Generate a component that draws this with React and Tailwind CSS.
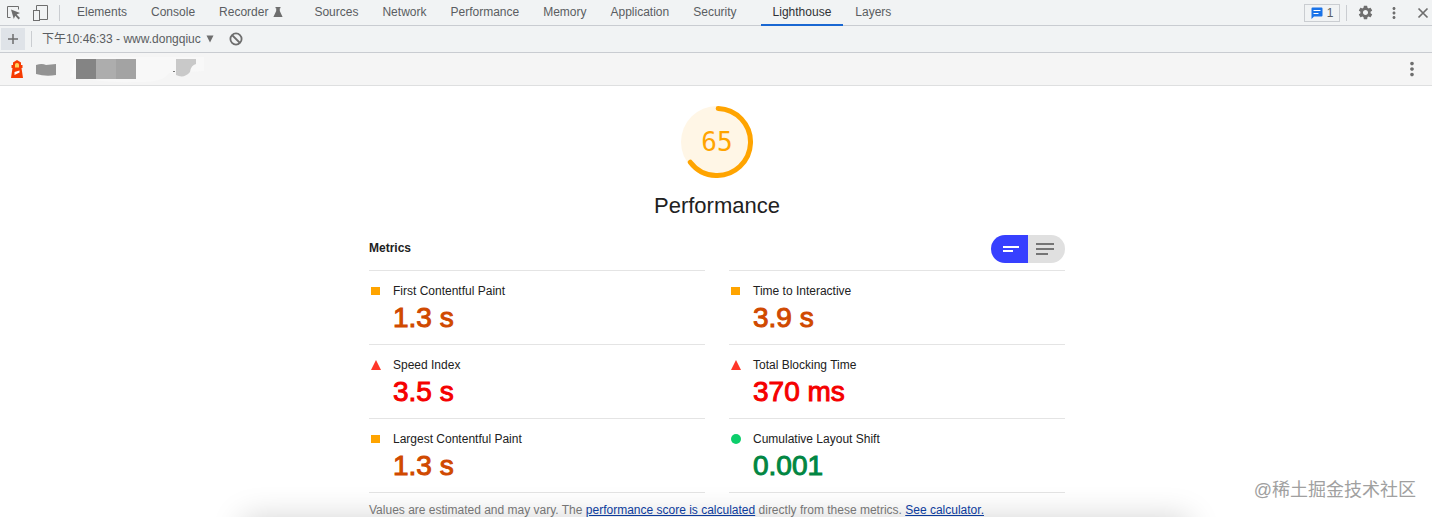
import { useState } from 'react';
import { MdSettings, MdMoreVert } from 'react-icons/md';

const TABS = ['Elements', 'Console', 'Recorder', 'Sources', 'Network', 'Performance', 'Memory', 'Application', 'Security', 'Lighthouse', 'Layers'];

const METRICS = [
  { name: 'First Contentful Paint', value: '1.3 s', rating: 'average' },
  { name: 'Time to Interactive', value: '3.9 s', rating: 'average' },
  { name: 'Speed Index', value: '3.5 s', rating: 'fail' },
  { name: 'Total Blocking Time', value: '370 ms', rating: 'fail' },
  { name: 'Largest Contentful Paint', value: '1.3 s', rating: 'average' },
  { name: 'Cumulative Layout Shift', value: '0.001', rating: 'pass' },
];

const VALUE_COLORS = {
  average: 'text-[#d04900]',
  fail: 'text-[#f50000]',
  pass: 'text-[#018642]',
};

function RatingIcon({ rating }) {
  return (
    <svg width="14" height="14" viewBox="0 0 14 14" className="shrink-0" aria-hidden="true">
      {rating === 'average' && <rect x="2" y="3" width="9" height="8" fill="#ffa400" />}
      {rating === 'fail' && <path d="M7 2 L12 12 H2 Z" fill="#ff3629" />}
      {rating === 'pass' && <circle cx="7" cy="7" r="5" fill="#0cce6b" />}
    </svg>
  );
}

function Metric({ name, value, rating }) {
  return (
    <div className="flex h-[74px] gap-[10px] border-t border-[#e4e4e4] pt-[13px]">
      <RatingIcon rating={rating} />
      <div>
        <h3 className="text-xs leading-[14px] text-[#212121]">{name}</h3>
        <p className={`text-[28px] leading-10 [-webkit-text-stroke:1px] ${VALUE_COLORS[rating]}`}>{value}</p>
      </div>
    </div>
  );
}

function Gauge({ score }) {
  const length = 2 * Math.PI * 33;
  return (
    <div className="relative size-[72px]">
      <svg viewBox="0 0 72 72" className="size-full" aria-hidden="true">
        <circle cx="36" cy="36" r="36" fill="#fff6e6" />
        <circle
          cx="36" cy="36" r="33.5" fill="none" stroke="#ffa400" strokeWidth="5" strokeLinecap="round"
          strokeDasharray={`${(length * score) / 100} ${length}`} transform="rotate(-88 36 36)"
        />
      </svg>
      <span className="absolute inset-0 flex items-center justify-center font-['DejaVu_Sans_Mono',monospace] text-[26px] text-[#ffa400]">{score}</span>
    </div>
  );
}

function LighthouseLogo() {
  return (
    <svg width="14" height="20" viewBox="0 0 14 20" className="shrink-0" aria-hidden="true">
      <path d="M7 1 L11 3.5 V6 H12.5 V9 H11.5 L13 19 H1 L2.5 9 H1.5 V6 H3 V3.5 Z" fill="#f63b02" />
      <path d="M5 8.5 V5.5 Q5 4 7 4 Q9 4 9 5.5 V8.5 Z" fill="#ffd15c" />
      <path d="M4.5 13 L9.5 11.5 V13.5 L4.5 16 Z" fill="#fff" />
    </svg>
  );
}

export default function App() {
  const [tab, setTab] = useState('Lighthouse');
  const [expanded, setExpanded] = useState(false);

  return (
    <div className="relative min-h-screen overflow-hidden bg-white font-['Liberation_Sans','Noto_Sans_CJK_SC',sans-serif] text-xs text-[#5a5d61]">
      <header className="flex h-[26px] items-center justify-between border-b border-[#c9ccd1] bg-[#f1f3f4]">
        <div className="flex h-full items-center">
          <button className="ml-1.5" aria-label="Inspect">
            <svg width="16" height="16" viewBox="0 0 16 16" fill="none" stroke="#6e6e6e">
              <path d="M4.5 12.5 H1.5 V1.5 H12.5 V4.5" />
              <path d="M5 4.5 L14 8 L10.6 9.4 L14 13 L12.6 14.4 L9.2 10.8 L7.8 14 Z" fill="#6e6e6e" stroke="none" />
            </svg>
          </button>
          <button className="ml-[10px]" aria-label="Toggle device toolbar">
            <svg width="16" height="18" viewBox="0 0 16 18" fill="none" stroke="#6e6e6e">
              <path d="M4.5 6 V1.5 H15.5 V15.5 H8" />
              <rect x="1.5" y="6.5" width="6" height="10" />
            </svg>
          </button>
          <span className="ml-[11px] h-4 w-px bg-[#cacdd1]" />
          <nav className="ml-[5px] flex h-[26px]">
            {TABS.map(name => (
              <button
                key={name}
                onClick={() => setTab(name)}
                className={`flex items-center gap-1 border-b-2 px-3 pt-px leading-4 ${name === 'Recorder' ? 'mr-1.5' : ''} ${name === 'Security' ? 'mr-3' : ''} ${
                  tab === name ? 'border-[#1967d2] text-[#303134]' : 'border-transparent'
                }`}
              >
                {name}
                {name === 'Recorder' && (
                  <svg width="12" height="12" viewBox="0 0 12 12" fill="#6e6e6e" aria-hidden="true">
                    <path d="M3.5 1 H8.5 V2.2 H7.8 V5 L10.6 11 H1.4 L4.2 5 V2.2 H3.5 Z" />
                  </svg>
                )}
              </button>
            ))}
          </nav>
        </div>
        <div className="flex items-center">
          <button className="flex h-[18px] w-9 items-center justify-center gap-1 border border-[#cacdd1]">
            <svg width="12" height="12" viewBox="0 0 12 12" aria-hidden="true">
              <path d="M1.5 0.5 H10.5 Q11.5 0.5 11.5 1.5 V8.5 Q11.5 9.5 10.5 9.5 H3 L0.5 12 V1.5 Q0.5 0.5 1.5 0.5 Z" fill="#1a73e8" />
              <path d="M2.5 3.5 H9.5 M2.5 6.5 H7.5" stroke="#fff" />
            </svg>
            1
          </button>
          <span className="ml-1.5 h-4 w-px bg-[#cacdd1]" />
          <button className="ml-[10px]" aria-label="Settings"><MdSettings size={17} color="#6e6e6e" /></button>
          <button className="ml-[11px]" aria-label="More"><MdMoreVert size={18} color="#6e6e6e" /></button>
          <button className="ml-3.5 mr-[3px]" aria-label="Close">
            <svg width="12" height="12" viewBox="0 0 12 12" stroke="#6e6e6e" strokeWidth="1.7"><path d="M1.5 1.5 L10.5 10.5 M10.5 1.5 L1.5 10.5" /></svg>
          </button>
        </div>
      </header>

      <div className="flex h-[27px] items-center border-b border-[#c9ccd1] bg-[#f1f3f4]">
        <button className="ml-px flex h-[22px] w-6 items-center justify-center bg-[#dfe3e8]" aria-label="New report">
          <svg width="12" height="12" viewBox="0 0 12 12" stroke="#6e6e6e" strokeWidth="1.5"><path d="M6 1 V11 M1 6 H11" /></svg>
        </button>
        <span className="ml-1.5 h-4 w-px bg-[#cacdd1]" />
        <button className="ml-[10px] flex items-center gap-1" aria-label="Reports">
          <span className="w-[160px] whitespace-nowrap text-left leading-4">下午10:46:33 - www.dongqiuc</span>
          <svg width="8" height="8" viewBox="0 0 8 8" aria-hidden="true"><path d="M0.5 0.5 H7.5 L4 7.5 Z" fill="#6e6e6e" /></svg>
        </button>
        <button className="ml-[15px]" aria-label="Clear all">
          <svg width="14" height="14" viewBox="0 0 14 14" fill="none" stroke="#6e6e6e" strokeWidth="1.8"><circle cx="7" cy="7" r="5.6" /><path d="M3 3 L11 11" /></svg>
        </button>
      </div>

      <div className="flex h-[33px] items-center justify-between border-b border-[#dedfe0] bg-[#f5f5f5]">
        <div className="flex items-center pl-[10px]">
          <LighthouseLogo />
          {/* redacted site address */}
          <svg width="190" height="32" viewBox="0 0 190 32" aria-hidden="true">
            <path d="M46 24 Q80 30 110 29 Q140 30 145 20 L180 18 V4 H52 Z" fill="#f8f8f8" />
            <path d="M12 12 Q18 10 22 12 L32 11 V22 Q22 24 12 21 Z" fill="#939393" />
            <rect x="52" y="6" width="20" height="20" fill="#848484" />
            <rect x="72" y="6" width="20" height="20" fill="#adadad" />
            <rect x="92" y="6" width="20" height="20" fill="#a3a3a3" />
            <path d="M152 6 H172 V11 Q167 12 166 19 Q160 26 152 22 Z" fill="#c9c9c9" />
            <rect x="149" y="18" width="2" height="1" fill="#777" />
          </svg>
        </div>
        <button className="mr-[9px]" aria-label="Report options"><MdMoreVert size={22} color="#6e6e6e" /></button>
      </div>

      <main className="mx-auto max-w-[698px] pt-5 pl-0.5">
        <div className="flex flex-col items-center">
          <Gauge score={65} />
          <h1 className="mt-3 text-[22px] leading-8 text-[#212121]">Performance</h1>
        </div>

        <div className="mt-[13px] flex items-start justify-between">
          <h2 className="pt-[5px] font-bold leading-4 text-[#212121]">Metrics</h2>
          <div className="flex h-7 overflow-hidden rounded-full">
            <button
              onClick={() => setExpanded(false)}
              className={`flex w-[37px] items-center justify-center ${expanded ? 'bg-[#e0e0e0] text-[#757575]' : 'bg-[#3740ff] text-white'}`}
              aria-label="Compact view"
            >
              <svg width="18" height="12" viewBox="0 0 18 12" fill="currentColor"><path d="M2 3 H18 V5 H2 Z M2 7 H12 V9 H2 Z" /></svg>
            </button>
            <button
              onClick={() => setExpanded(true)}
              className={`flex w-[37px] items-center justify-center pr-[3px] ${expanded ? 'bg-[#3740ff] text-white' : 'bg-[#e0e0e0] text-[#757575]'}`}
              aria-label="Expanded view"
            >
              <svg width="18" height="12" viewBox="0 0 18 12" fill="currentColor"><path d="M0 0 H18 V2 H0 Z M0 5 H18 V7 H0 Z M0 10 H12 V12 H0 Z" /></svg>
            </button>
          </div>
        </div>

        <div className="mt-[7px] grid grid-cols-2 gap-x-6">
          {METRICS.map(metric => <Metric key={metric.name} {...metric} />)}
          <div className="border-t border-[#e4e4e4]" />
          <div className="border-t border-[#e4e4e4]" />
        </div>

        <p className="relative z-10 mt-[9px] leading-4 text-[#757575]">
          Values are estimated and may vary. The <a href="#score" className="text-[#0c3b9c] underline">performance score is calculated</a> directly from these metrics. <a href="#calculator" className="text-[#0c3b9c] underline">See calculator.</a>
        </p>
      </main>

      {/* shadow of the window below */}
      <div className="pointer-events-none absolute inset-x-[17%] top-full h-10 shadow-[0_0_32px_rgba(0,0,0,0.18)]" />
      <span className="absolute right-4 bottom-4 text-[18px] leading-6 text-[#a0a0a0]">@稀土掘金技术社区</span>
    </div>
  );
}
